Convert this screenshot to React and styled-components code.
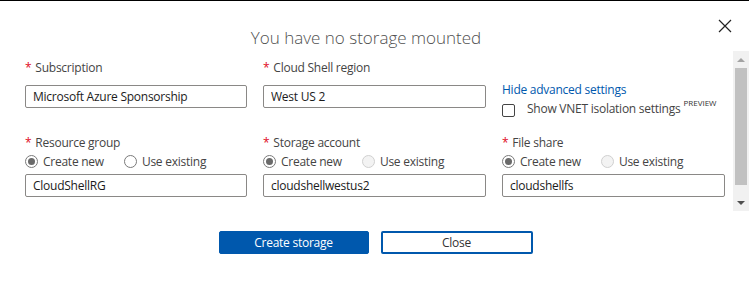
import React from "react"
import styled, { createGlobalStyle } from "styled-components"

const GlobalStyle = createGlobalStyle`
  html, body {
    margin: 0;
    padding: 0;
    background: #fff;
  }
  body {
    font-family: "Open Sans", "Noto Sans", sans-serif;
  }
`

const Dialog = styled.div`
  width: 749px;
  height: 280px;
  border-top: 1px solid #000;
  background: #fff;
  color: #444;
  font-size: 12px;
  letter-spacing: -0.25px;
`

const Header = styled.div`
  display: grid;
  grid-template-columns: 1fr auto 1fr;
  align-items: start;
  height: 32px;
  padding: 18px 17px 0 0;
`

const Title = styled.h1`
  grid-column: 2;
  margin: 0;
  padding-top: 6px;
  font-size: 17px;
  line-height: 26px;
  font-weight: 300;
  letter-spacing: 0;
  color: #505050;
  white-space: nowrap;
`

const CloseX = styled.button`
  grid-column: 3;
  justify-self: end;
  width: 14px;
  height: 14px;
  padding: 0;
  border: 0;
  background: none;
  cursor: pointer;
  svg {
    display: block;
  }
`

const Body = styled.div`
  display: flex;
  height: 160px;
`

const Form = styled.div`
  flex: 1;
  display: grid;
  grid-template-columns: 222px 223px 223px;
  grid-template-rows: 49px auto;
  column-gap: 16px;
  row-gap: 26px;
  align-content: start;
  padding: 8px 0 0 25px;
`

const Field = styled.div`
  display: flex;
  flex-direction: column;
  padding-top: ${p => p.$offset || 0}px;
`

const Label = styled.div`
  line-height: 18px;
  margin-bottom: ${p => (p.$tight ? 0 : 8)}px;
  white-space: nowrap;
  color: #444;
`

const Star = styled.span`
  color: #e00b1c;
  margin-right: 4px;
`

const Input = styled.input`
  box-sizing: border-box;
  width: 100%;
  height: 23px;
  margin: 0;
  padding: 0 7px;
  border: 1px solid #8a8886;
  border-radius: 2px;
  font: inherit;
  letter-spacing: inherit;
  color: #1b1b1b;
  background: #fff;
  outline: none;
`

const RadioRow = styled.div`
  display: flex;
  align-items: center;
  gap: 20px;
  height: 18px;
  margin-bottom: 4px;
`

const RadioOption = styled.label`
  display: flex;
  align-items: center;
  gap: 5px;
  white-space: nowrap;
  color: #444;
`

const RadioDot = styled.span`
  box-sizing: border-box;
  flex-shrink: 0;
  width: 13px;
  height: 13px;
  border-radius: 50%;
  border: 1px solid ${p => (p.$disabled ? "#d0d0d0" : "#7a7a7a")};
  background: ${p => (p.$disabled ? "#f3f3f3" : "#fff")};
  display: flex;
  align-items: center;
  justify-content: center;
  &::after {
    content: "";
    width: 7px;
    height: 7px;
    border-radius: 50%;
    background: ${p => (p.$checked ? "#6a6a6a" : "transparent")};
  }
`

const Link = styled.a`
  line-height: 18px;
  color: #0058ad;
  text-decoration: none;
  cursor: pointer;
`

const CheckRow = styled.label`
  display: flex;
  align-items: center;
  gap: 12px;
  height: 18px;
  white-space: nowrap;
  color: #444;
`

const CheckBox = styled.span`
  box-sizing: border-box;
  flex-shrink: 0;
  width: 13px;
  height: 13px;
  border: 1px solid #444;
  border-radius: 2px;
  background: #fff;
  margin-top: 4px;
`

const Preview = styled.sup`
  font-size: 8px;
  letter-spacing: 0;
  margin-left: 3px;
  color: #333;
  position: relative;
  top: -2px;
`

const Scrollbar = styled.div`
  width: 16px;
  display: flex;
  flex-direction: column;
  align-items: center;
  background: #f1f1f1;
`

const ScrollButton = styled.div`
  height: 17px;
  display: flex;
  align-items: center;
  justify-content: center;
  &::after {
    content: "";
    border-left: 4px solid transparent;
    border-right: 4px solid transparent;
    ${p =>
      p.$down
        ? "border-top: 4px solid #505050;"
        : "border-bottom: 4px solid #a3a3a3;"}
  }
`

const Thumb = styled.div`
  width: 12px;
  height: 117px;
  background: #c1c1c1;
`

const Spacer = styled.div`
  flex: 1;
`

const Footer = styled.div`
  display: flex;
  justify-content: center;
  gap: 12px;
  padding: 20px 0 0 2px;
`

const Button = styled.button`
  box-sizing: border-box;
  width: ${p => p.$width}px;
  height: 23px;
  border-radius: 2px;
  font: inherit;
  letter-spacing: inherit;
  cursor: pointer;
  border: ${p => (p.$primary ? "1px solid #0058ad" : "2px solid #0058ad")};
  background: ${p => (p.$primary ? "#0058ad" : "#fff")};
  color: ${p => (p.$primary ? "#fff" : "#333")};
`

const Radios = ({ disabledExisting }) => (
  <RadioRow>
    <RadioOption>
      <RadioDot $checked />
      Create new
    </RadioOption>
    <RadioOption>
      <RadioDot $disabled={disabledExisting} />
      Use existing
    </RadioOption>
  </RadioRow>
)

export default function App() {
  return (
    <>
      <GlobalStyle />
      <Dialog>
        <Header>
          <Title>You have no storage mounted</Title>
          <CloseX aria-label="Close">
            <svg width="14" height="14" viewBox="0 0 14 14">
              <path d="M1 1 L13 13 M13 1 L1 13" stroke="#222" strokeWidth="1.2" fill="none" />
            </svg>
          </CloseX>
        </Header>
        <Body>
          <Form>
            <Field>
              <Label><Star>*</Star>Subscription</Label>
              <Input defaultValue="Microsoft Azure Sponsorship" readOnly />
            </Field>
            <Field>
              <Label><Star>*</Star>Cloud Shell region</Label>
              <Input defaultValue="West US 2" readOnly />
            </Field>
            <Field $offset={22}>
              <Link>Hide advanced settings</Link>
              <CheckRow>
                <CheckBox />
                <span>
                  Show VNET isolation settings<Preview>PREVIEW</Preview>
                </span>
              </CheckRow>
            </Field>
            <Field>
              <Label $tight><Star>*</Star>Resource group</Label>
              <Radios />
              <Input defaultValue="CloudShellRG" readOnly />
            </Field>
            <Field>
              <Label $tight><Star>*</Star>Storage account</Label>
              <Radios disabledExisting />
              <Input defaultValue="cloudshellwestus2" readOnly />
            </Field>
            <Field>
              <Label $tight><Star>*</Star>File share</Label>
              <Radios disabledExisting />
              <Input defaultValue="cloudshellfs" readOnly />
            </Field>
          </Form>
          <Scrollbar>
            <ScrollButton />
            <Thumb />
            <Spacer />
            <ScrollButton $down />
          </Scrollbar>
        </Body>
        <Footer>
          <Button $primary $width={150}>Create storage</Button>
          <Button $width={152}>Close</Button>
        </Footer>
      </Dialog>
    </>
  )
}
